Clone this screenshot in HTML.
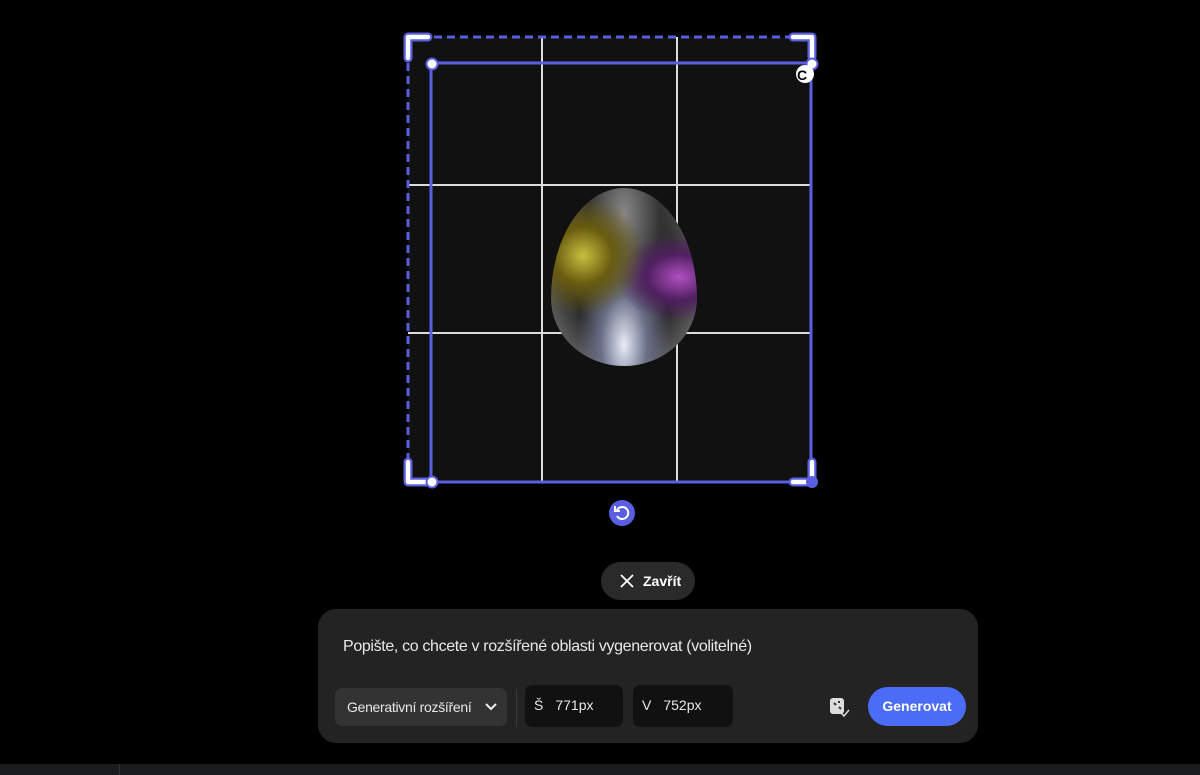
<!DOCTYPE html>
<html><head><meta charset="utf-8"><style>
body{margin:0;width:1200px;height:775px;background:#000;position:relative;overflow:hidden;font-family:"Liberation Sans",sans-serif}
.a{position:absolute}
</style></head><body>
<div class="a" style="left:408px;top:37px;width:403px;height:445px;background:#111"></div>
<div class="a" style="left:541px;top:37px;width:2px;height:445px;background:#ddd"></div>
<div class="a" style="left:676px;top:37px;width:2px;height:445px;background:#ddd"></div>
<div class="a" style="left:408px;top:184px;width:403px;height:2px;background:#ddd"></div>
<div class="a" style="left:408px;top:332px;width:403px;height:2px;background:#ddd"></div>
<div class="a" style="left:551px;top:188px;width:146px;height:178px;border-radius:50% 50% 50% 50%/62% 62% 38% 38%;background:radial-gradient(ellipse at 22% 38%,#c8c040 0%,#6a5c10 18%,transparent 38%),radial-gradient(ellipse at 88% 50%,#b050c0 0%,#502060 18%,transparent 35%),radial-gradient(ellipse at 50% 88%,#e8ecf8 0%,#6a7088 22%,transparent 45%),radial-gradient(ellipse at 50% 15%,#888 0%,#333 35%,transparent 60%),radial-gradient(ellipse at 50% 50%,#1a1a1a 0%,#2a2a2a 50%,#888 100%)"></div>
<svg class="a" style="left:0;top:0" width="1200" height="775">
<line x1="408" y1="37" x2="811" y2="37" stroke="#5a5ee0" stroke-width="3" stroke-dasharray="8,5"/>
<line x1="408" y1="37" x2="408" y2="482" stroke="#5a5ee0" stroke-width="3" stroke-dasharray="8,5"/>
<rect x="431" y="63" width="380" height="419" fill="none" stroke="#5a5ee0" stroke-width="3"/>
<path d="M408 58V37h20M793 37h19v20M408 462v20h20M793 482h19v-20" fill="none" stroke="#5a5ee0" stroke-width="9" stroke-linejoin="round" stroke-linecap="round"/>
<path d="M408 58V37h20M793 37h19v20M408 462v20h20M793 482h19v-20" fill="none" stroke="#fff" stroke-width="4.5" stroke-linejoin="round" stroke-linecap="round"/>
<circle cx="432" cy="64" r="5.5" fill="#fff" stroke="#5a5ee0" stroke-width="2"/>
<circle cx="812" cy="64" r="5.5" fill="#fff" stroke="#5a5ee0" stroke-width="2"/>
<circle cx="432" cy="482" r="5.5" fill="#fff" stroke="#5a5ee0" stroke-width="2"/>
<circle cx="812" cy="482" r="6" fill="#5a5ee0"/>
<circle cx="805" cy="74" r="9" fill="#fff"/><text x="797" y="80" font-size="14" font-weight="bold" fill="#000">C</text>
<circle cx="622" cy="513" r="13" fill="#5a5ee0"/>
<path d="M617 510a6 6 0 1 1 0 6" fill="none" stroke="#fff" stroke-width="2"/><path d="M615 506v5h5" fill="none" stroke="#fff" stroke-width="2"/>
</svg>
<div class="a" style="left:601px;top:562px;width:94px;height:38px;border-radius:19px;background:#2a2a2a;color:#fff;font-size:14px;font-weight:bold;line-height:38px"><svg class="a" style="left:18px;top:11px" width="16" height="16"><path d="M2 2l12 12M14 2L2 14" stroke="#fff" stroke-width="1.8"/></svg><span style="position:absolute;left:42px">Zavřít</span></div>
<div class="a" style="left:318px;top:609px;width:660px;height:134px;border-radius:18px;background:#232323">
<div class="a" style="left:25px;top:29px;color:#e8e8e8;font-size:16px;letter-spacing:-0.35px">Popište, co chcete v rozšířené oblasti vygenerovat (volitelné)</div>
<div class="a" style="left:17px;top:79px;width:172px;height:38px;border-radius:7px;background:#333;color:#e8e8e8;font-size:14px;line-height:38px;letter-spacing:-0.3px"><span style="margin-left:12px">Generativní rozšíření</span><svg class="a" style="left:150px;top:14px" width="12" height="10"><path d="M1 2l5 5 5-5" fill="none" stroke="#eee" stroke-width="2"/></svg></div>
<div class="a" style="left:198px;top:80px;width:1px;height:38px;background:#3a3a3a"></div>
<div class="a" style="left:207px;top:76px;width:98px;height:42px;border-radius:7px;background:#111;color:#e8e8e8;font-size:14px;line-height:40px"><span style="margin-left:9px">Š</span><span style="margin-left:12px">771px</span></div>
<div class="a" style="left:315px;top:76px;width:100px;height:42px;border-radius:7px;background:#111;color:#e8e8e8;font-size:14px;line-height:40px"><span style="margin-left:9px">V</span><span style="margin-left:12px">752px</span></div>
<svg class="a" style="left:511px;top:88px" width="22" height="22"><rect x="1" y="1" width="14" height="16" rx="3" fill="#ddd"/><path d="M5 6l2 2M10 10l2 2M9 5l2 0" stroke="#333" stroke-width="2"/><path d="M12 16l3 3 5-6" fill="none" stroke="#ddd" stroke-width="1.5"/></svg>
<div class="a" style="left:550px;top:78px;width:98px;height:39px;border-radius:20px;background:#4a6cf7;color:#fff;font-size:14px;font-weight:bold;line-height:39px;text-align:center">Generovat</div>
</div>
<div class="a" style="left:0;top:764px;width:1200px;height:11px;background:#1a1b1d"></div>
<div class="a" style="left:119px;top:764px;width:1px;height:11px;background:#333"></div>
</body></html>
